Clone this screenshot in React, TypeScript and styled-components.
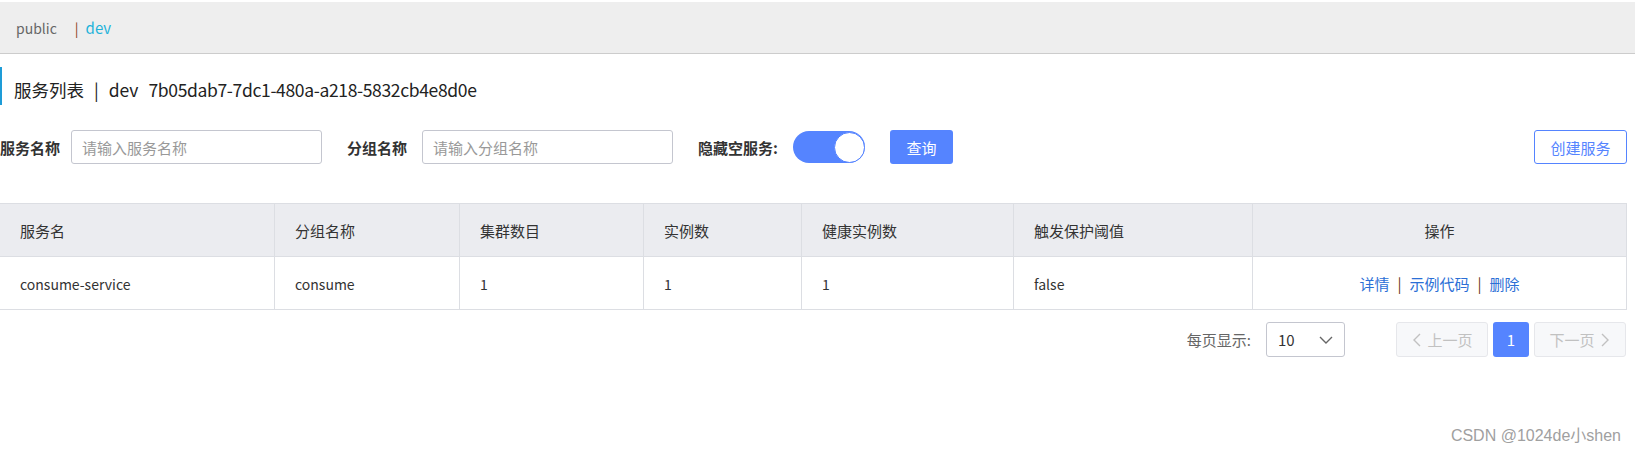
import styled, { createGlobalStyle } from 'styled-components';

const GlobalStyle = createGlobalStyle`
  html, body {
    margin: 0;
    padding: 0;
    background: #fff;
  }
  body {
    font-family: "Noto Sans CJK SC", "Noto Sans", sans-serif;
    color: #333;
    font-size: 15px;
  }
`;

interface Column {
  key: string;
  title: string;
  width: number;
  center?: boolean;
}

const columns: Column[] = [
  { key: 'name', title: '服务名', width: 275 },
  { key: 'group', title: '分组名称', width: 185 },
  { key: 'clusters', title: '集群数目', width: 184 },
  { key: 'ips', title: '实例数', width: 158 },
  { key: 'healthy', title: '健康实例数', width: 212 },
  { key: 'threshold', title: '触发保护阈值', width: 239 },
  { key: 'ops', title: '操作', width: 374, center: true },
];

const rows = [
  {
    name: 'consume-service',
    group: 'consume',
    clusters: '1',
    ips: '1',
    healthy: '1',
    threshold: 'false',
  },
];

const Chevron = ({ dir }: { dir: 'left' | 'right' | 'down' }) => {
  const points =
    dir === 'left' ? '9,2 3,8 9,14' : dir === 'right' ? '3,2 9,8 3,14' : '2,5 8,11 14,5';
  const w = dir === 'down' ? 16 : 12;
  return (
    <svg width={w} height="16" viewBox={`0 0 ${w} 16`}>
      <polyline points={points} fill="none" stroke="currentColor" strokeWidth="1.4" />
    </svg>
  );
};

const App = () => {
  return (
    <Page>
      <GlobalStyle />
      <TopBar>
        <NsItem>public</NsItem>
        <NsSep>|</NsSep>
        <NsItem active>dev</NsItem>
      </TopBar>

      <TitleBar>
        <span>服务列表</span>
        <TitleSep>|</TitleSep>
        <span>dev</span>
        <TitleId>7b05dab7-7dc1-480a-a218-5832cb4e8d0e</TitleId>
      </TitleBar>

      <FilterRow>
        <FirstLabel>服务名称</FirstLabel>
        <Input placeholder="请输入服务名称" />
        <Label>分组名称</Label>
        <Input placeholder="请输入分组名称" />
        <Label>隐藏空服务:</Label>
        <Toggle>
          <Knob />
        </Toggle>
        <PrimaryButton>查询</PrimaryButton>
        <Spacer />
        <OutlineButton>创建服务</OutlineButton>
      </FilterRow>

      <Table>
        {columns.map((c) => (
          <HeadCell key={c.key} center={c.center}>
            {c.title}
          </HeadCell>
        ))}
        {rows.map((r) =>
          columns.map((c) => (
            <BodyCell key={r.name + c.key} center={c.center}>
              {c.key === 'ops' ? (
                <>
                  <Link>详情</Link>
                  <LinkSep>|</LinkSep>
                  <Link>示例代码</Link>
                  <LinkSep>|</LinkSep>
                  <Link>删除</Link>
                </>
              ) : (
                <Value>{r[c.key as keyof typeof r]}</Value>
              )}
            </BodyCell>
          ))
        )}
      </Table>

      <Pager>
        <PagerLabel>每页显示:</PagerLabel>
        <Select>
          <span>10</span>
          <Chevron dir="down" />
        </Select>
        <PageButton disabled>
          <Chevron dir="left" />
          上一页
        </PageButton>
        <PageNumber>1</PageNumber>
        <PageButton disabled>
          下一页
          <Chevron dir="right" />
        </PageButton>
      </Pager>

      <Watermark>CSDN @1024de小shen</Watermark>
    </Page>
  );
};

const Page = styled.div`
  position: relative;
  width: 1635px;
  height: 455px;
  overflow: hidden;
  padding-top: 2px;
  box-sizing: border-box;
`;

const TopBar = styled.div`
  display: flex;
  align-items: center;
  height: 51px;
  background: #eeeeee;
  border-bottom: 1px solid #cccccc;
  padding-left: 16px;
  font-size: 14px;
`;

const NsItem = styled.span<{ active?: boolean }>`
  color: ${(p) => (p.active ? '#1fb3da' : '#666')};
  font-size: ${(p) => (p.active ? '15px' : '14px')};
`;

const NsSep = styled.span`
  color: #8b3c22;
  margin: 0 7px 0 18px;
`;

const TitleBar = styled.div`
  display: flex;
  align-items: flex-start;
  margin-top: 13px;
  height: 38px;
  box-sizing: border-box;
  padding: 9px 0 0 12px;
  border-left: 2px solid #1e9cd7;
  font-size: 17.5px;
  line-height: 28px;
  color: #222;
`;

const TitleSep = styled.span`
  margin: 0 10px;
`;

const TitleId = styled.span`
  margin-left: 10px;
  letter-spacing: -0.35px;
`;

const FilterRow = styled.div`
  display: flex;
  align-items: center;
  margin-top: 25px;
  height: 34px;
  width: 1627px;
`;

const Label = styled.span`
  font-weight: 700;
  font-size: 15px;
  color: #333;
  margin: 0 15px 0 25px;
  white-space: nowrap;
`;

const FirstLabel = styled(Label)`
  margin-left: 0;
  margin-right: 11px;
`;

const Input = styled.input`
  width: 251px;
  height: 34px;
  box-sizing: border-box;
  border: 1px solid #c4c6cf;
  border-radius: 3px;
  padding: 0 10px;
  font-family: inherit;
  font-size: 15px;
  color: #333;
  outline: none;
  &::placeholder {
    color: #999;
  }
`;

const Toggle = styled.div`
  display: flex;
  justify-content: flex-end;
  align-items: center;
  width: 72px;
  height: 32px;
  border-radius: 16px;
  background: #5584ff;
  box-sizing: border-box;
`;

const Knob = styled.div`
  width: 31px;
  height: 31px;
  border-radius: 50%;
  background: #fff;
  border: 1px solid #5584ff;
  box-sizing: border-box;
`;

const PrimaryButton = styled.button`
  margin-left: 25px;
  width: 63px;
  height: 34px;
  border: none;
  border-radius: 3px;
  background: #5584ff;
  color: #fff;
  font-family: inherit;
  font-size: 15px;
`;

const Spacer = styled.div`
  flex: 1;
`;

const OutlineButton = styled.button`
  width: 93px;
  height: 34px;
  border: 1px solid #5584ff;
  border-radius: 3px;
  background: #fff;
  color: #5584ff;
  font-family: inherit;
  font-size: 15px;
`;

const Table = styled.div`
  display: grid;
  grid-template-columns: ${columns.map((c) => `${c.width}px`).join(' ')};
  margin-top: 39px;
  width: 1627px;
  border-top: 1px solid #dcdee3;
`;

const Cell = styled.div<{ center?: boolean }>`
  display: flex;
  align-items: center;
  justify-content: ${(p) => (p.center ? 'center' : 'flex-start')};
  height: 53px;
  box-sizing: border-box;
  padding: 1px 20px 0;
  border-right: 1px solid #dcdee3;
  border-bottom: 1px solid #dcdee3;
  font-size: 15px;
  color: #333;
  white-space: nowrap;
`;

const HeadCell = styled(Cell)`
  background: #ebecf0;
`;

const BodyCell = styled(Cell)`
  background: #fff;
`;

const Value = styled.span`
  font-size: 14px;
`;

const Link = styled.a`
  color: #2b6fd6;
  cursor: pointer;
`;

const LinkSep = styled.span`
  color: #6b3a22;
  margin: 0 8px;
`;

const Pager = styled.div`
  display: flex;
  align-items: center;
  justify-content: flex-end;
  width: 1626px;
  margin-top: 12px;
  height: 35px;
`;

const PagerLabel = styled.span`
  color: #666;
  font-size: 15px;
  margin-right: 15px;
`;

const Select = styled.div`
  display: flex;
  align-items: center;
  justify-content: space-between;
  width: 79px;
  height: 35px;
  box-sizing: border-box;
  border: 1px solid #c4c6cf;
  border-radius: 3px;
  padding: 0 10px 0 11px;
  margin-right: 51px;
  color: #333;
  font-size: 15px;
  svg {
    color: #666;
  }
`;

const PageButton = styled.div<{ disabled?: boolean }>`
  display: flex;
  align-items: center;
  justify-content: center;
  gap: 4px;
  width: 92px;
  height: 35px;
  box-sizing: border-box;
  border: 1px solid #e6e7eb;
  border-radius: 3px;
  background: #f7f8fa;
  color: #c1c1c1;
  font-size: 15px;
`;

const PageNumber = styled.div`
  display: flex;
  align-items: center;
  justify-content: center;
  width: 36px;
  height: 35px;
  margin: 0 5px;
  border-radius: 3px;
  background: #5584ff;
  color: #fff;
  font-size: 15px;
`;

const Watermark = styled.div`
  position: absolute;
  right: 14px;
  bottom: 9px;
  font-family: "Liberation Sans", "Noto Sans CJK SC", sans-serif;
  font-size: 16px;
  color: #a0a0a0;
  text-shadow: 0 0 1px #fff;
`;

export default App;
